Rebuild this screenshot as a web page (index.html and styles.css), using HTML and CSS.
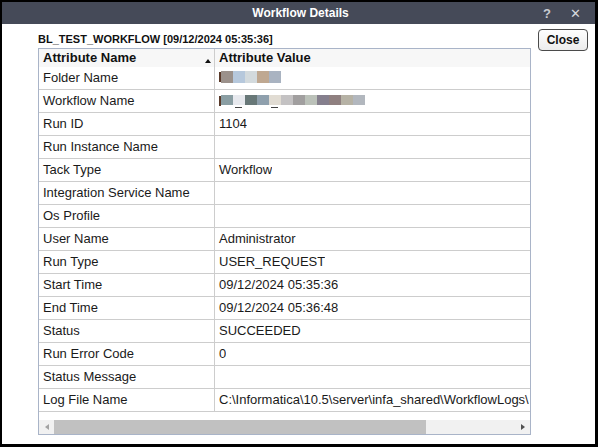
FILE: index.html
```html
<!DOCTYPE html>
<html>
<head>
<meta charset="utf-8">
<link rel="stylesheet" href="styles.css">
</head>
<body>
<div class="win">
  <div class="titlebar">
    <span class="title">Workflow Details</span>
    <span class="tb-btns"><span class="help">?</span><span class="x">&#x2715;</span></span>
  </div>
  <div class="content">
    <div class="main">
      <div class="caption">BL_TEST_WORKFLOW [09/12/2024 05:35:36]</div>
      <div class="grid">
        <div class="rows">
          <div class="row head"><div class="c1">Attribute Name<span class="sort"></span></div><div class="c2">Attribute Value</div></div>
          <div class="row"><div class="c1">Folder Name</div><div class="c2"><span class="blur"><i class="tick"></i><b style="background:#9b918b"></b><b style="background:#b6c8dc"></b><b style="background:#d3dadd"></b><b style="background:#bfa891"></b><b style="background:#a9b3c1"></b></span></div></div>
          <div class="row"><div class="c1">Workflow Name</div><div class="c2"><span class="blur wf"><i class="tick"></i><b style="background:#8a9ea3"></b><b style="background:#e7e9ee"><u></u></b><b style="background:#687878"></b><b style="background:#8fa0ad"></b><b style="background:#e1dcd3"><u></u></b><b style="background:#c4c2c3"></b><b style="background:#a19f9f"></b><b style="background:#bbc1b9"></b><b style="background:#857f8d"></b><b style="background:#8f8080"></b><b style="background:#b6b2a5"></b><b style="background:#b2b7be"></b></span></div></div>
          <div class="row"><div class="c1">Run ID</div><div class="c2">1104</div></div>
          <div class="row"><div class="c1">Run Instance Name</div><div class="c2"></div></div>
          <div class="row"><div class="c1">Tack Type</div><div class="c2">Workflow</div></div>
          <div class="row"><div class="c1">Integration Service Name</div><div class="c2"></div></div>
          <div class="row"><div class="c1">Os Profile</div><div class="c2"></div></div>
          <div class="row"><div class="c1">User Name</div><div class="c2">Administrator</div></div>
          <div class="row"><div class="c1">Run Type</div><div class="c2">USER_REQUEST</div></div>
          <div class="row"><div class="c1">Start Time</div><div class="c2">09/12/2024 05:35:36</div></div>
          <div class="row"><div class="c1">End Time</div><div class="c2">09/12/2024 05:36:48</div></div>
          <div class="row"><div class="c1">Status</div><div class="c2">SUCCEEDED</div></div>
          <div class="row"><div class="c1">Run Error Code</div><div class="c2">0</div></div>
          <div class="row"><div class="c1">Status Message</div><div class="c2"></div></div>
          <div class="row"><div class="c1">Log File Name</div><div class="c2 nowrap">C:\Informatica\10.5\server\infa_shared\WorkflowLogs\</div></div>
        </div>
        <div class="hscroll">
          <span class="arr left"></span>
          <div class="track"><div class="thumb"></div></div>
          <span class="arr right"></span>
        </div>
      </div>
    </div>
    <div class="side">
      <button class="close">Close</button>
    </div>
  </div>
</div>
</body>
</html>
```
FILE: styles.css
```css
html, body { margin: 0; padding: 0; }
body {
  background: #000;
  width: 598px;
  height: 447px;
  overflow: hidden;
  font-family: "Liberation Sans", Arial, sans-serif;
}
.win {
  margin: 2px 3px 0 2px;
  width: 593px;
  height: 442px;
  background: #fff;
  display: flex;
  flex-direction: column;
}
.titlebar {
  height: 22px;
  background: #454a58;
  position: relative;
  display: flex;
  align-items: center;
  justify-content: center;
  color: #fff;
}
.title {
  font-weight: bold;
  font-size: 12px;
  margin-left: 4px;
}
.tb-btns {
  position: absolute;
  right: 14px;
  top: 0;
  height: 22px;
  display: flex;
  align-items: center;
  gap: 19px;
  color: #d6d8dd;
  font-size: 13px;
}
.help { font-size: 13px; font-weight: bold; color: #c9ccd2; }
.x { font-size: 13px; color: #d6d8dd; }
.content {
  display: flex;
  padding: 0 0 0 36px;
}
.main { width: 493px; }
.caption {
  font-weight: bold;
  font-size: 11px;
  color: #111;
  height: 13px;
  line-height: 13px;
  margin-top: 9px;
  margin-bottom: 2px;
}
.grid {
  border: 1px solid #a9b4c8;
  width: 491px;
}
.rows { overflow: hidden; height: 363px; }
.row {
  display: flex;
  height: 22px;
  border-bottom: 1px solid #cdcdcd;
  font-size: 13px;
  color: #1a1a1a;
  line-height: 22px;
}
.row.head {
  height: 18px;
  line-height: 17px;
  background: #f7f7f7;
  border-bottom: none;
  font-weight: bold;
  color: #111;
}
.c1 {
  width: 171px;
  padding-left: 4px;
  border-right: 1px solid #cdcdcd;
  flex: none;
  position: relative;
  white-space: nowrap;
}
.c2 {
  padding-left: 4px;
  white-space: nowrap;
  overflow: hidden;
}
.sort {
  position: absolute;
  right: 3px;
  top: 10px;
  width: 0; height: 0;
  border-left: 3px solid transparent;
  border-right: 3px solid transparent;
  border-bottom: 4px solid #111;
}
.blur {
  display: inline-flex;
  height: 12px;
  vertical-align: middle;
  margin-top: -3px;
  position: relative;
  padding-left: 2px;
}
.blur.wf { height: 10px; }
.blur b {
  width: 12px;
  height: 100%;
  display: block;
  position: relative;
}
.blur u {
  position: absolute;
  left: 2px;
  bottom: -3px;
  width: 7px;
  height: 1px;
  background: #444;
}
.tick {
  position: absolute;
  left: 0;
  top: 1px;
  width: 2px;
  height: 10px;
  background: #5a3a2a;
}
.hscroll {
  height: 14px;
  margin-top: 8px;
  background: #f1f1f1;
  display: flex;
  align-items: center;
}
.track { flex: 1; height: 14px; display: flex; align-items: center; }
.thumb {
  margin-left: 0;
  width: 372px;
  height: 14px;
  background: #c1c1c1;
}
.arr { width: 15px; height: 14px; display: flex; align-items: center; justify-content: center; flex: none; }
.arr.left::before {
  content: "";
  border-top: 3px solid transparent;
  border-bottom: 3px solid transparent;
  border-right: 4px solid #a3a3a3;
}
.arr.right::before {
  content: "";
  border-top: 3px solid transparent;
  border-bottom: 3px solid transparent;
  border-left: 4px solid #505050;
}
.side { padding-left: 7px; padding-top: 5px; }
.close {
  width: 50px;
  height: 22px;
  border: 1px solid #4b4b4b;
  border-radius: 4px;
  background: linear-gradient(#fefefe, #ececec);
  font-family: "Liberation Sans", Arial, sans-serif;
  font-weight: bold;
  font-size: 12px;
  color: #111;
  padding: 0;
}
```
